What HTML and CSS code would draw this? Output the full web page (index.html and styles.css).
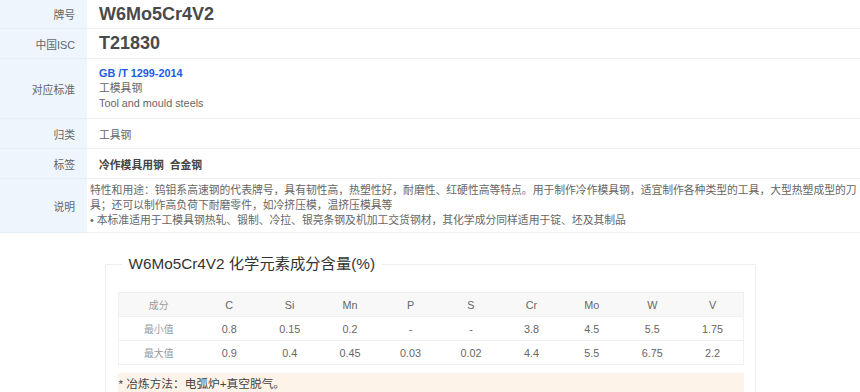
FILE: index.html
```html
<!DOCTYPE html>
<html lang="zh-CN">
<head>
<meta charset="utf-8">
<title>W6Mo5Cr4V2</title>
<link rel="stylesheet" href="styles.css">
</head>
<body>
<div class="info">
  <div class="row r1"><div class="lbl">牌号</div><div class="val big">W6Mo5Cr4V2</div></div>
  <div class="row r2"><div class="lbl">中国ISC</div><div class="val big">T21830</div></div>
  <div class="row r3"><div class="lbl">对应标准</div><div class="val lines"><a class="std">GB /T 1299-2014</a><span>工模具钢</span><span>Tool and mould steels</span></div></div>
  <div class="row r4"><div class="lbl">归类</div><div class="val">工具钢</div></div>
  <div class="row r5"><div class="lbl">标签</div><div class="val tags"><b>冷作模具用钢</b><b>合金钢</b></div></div>
  <div class="row r6"><div class="lbl">说明</div><div class="val desc"><p>特性和用途：钨钼系高速钢的代表牌号，具有韧性高，热塑性好，耐磨性、红硬性高等特点。用于制作冷作模具钢，适宜制作各种类型的工具，大型热塑成型的刀具；还可以制作高负荷下耐磨零件，如冷挤压模，温挤压模具等</p><p>• 本标准适用于工模具钢热轧、锻制、冷拉、银亮条钢及机加工交货钢材，其化学成分同样适用于锭、坯及其制品</p></div></div>
</div>
<fieldset class="chem">
  <legend>W6Mo5Cr4V2 化学元素成分含量(%)</legend>
  <table class="ctab">
    <colgroup><col class="c0"><col><col><col><col><col><col><col><col><col></colgroup>
    <tr class="head"><td class="k">成分</td><td>C</td><td>Si</td><td>Mn</td><td>P</td><td>S</td><td>Cr</td><td>Mo</td><td>W</td><td>V</td></tr>
    <tr><td class="k">最小值</td><td>0.8</td><td>0.15</td><td>0.2</td><td>-</td><td>-</td><td>3.8</td><td>4.5</td><td>5.5</td><td>1.75</td></tr>
    <tr><td class="k">最大值</td><td>0.9</td><td>0.4</td><td>0.45</td><td>0.03</td><td>0.02</td><td>4.4</td><td>5.5</td><td>6.75</td><td>2.2</td></tr>
  </table>
  <div class="note">* 冶炼方法：电弧炉+真空脱气。</div>
</fieldset>
</body>
</html>
```
FILE: styles.css
```css
html, body {
  margin: 0;
  padding: 0;
  background: #fff;
}
body {
  font-family: "Liberation Sans", "Noto Sans CJK SC", sans-serif;
  font-size: 10.8px;
  color: #666;
}
.info {
  display: flex;
  flex-direction: column;
}
.row {
  display: grid;
  grid-template-columns: 87px 1fr;
}
.lbl {
  background: #eef5fc;
  text-align: right;
  padding-right: 12px;
  display: flex;
  align-items: center;
  justify-content: flex-end;
  border-bottom: 1px solid #e6eef6;
  color: #666;
}
.val {
  padding-left: 12px;
  display: flex;
  align-items: center;
  border-bottom: 1px solid #f0f0f0;
  color: #666;
}
.r1 { height: 29px; }
.r2 { height: 30px; }
.r3 { height: 60px; }
.r4 { height: 30px; }
.r5 { height: 30px; }
.r6 { height: 54px; }
.big {
  font-size: 18px;
  font-weight: bold;
  color: #4a4a4a;
}
.lines {
  flex-direction: column;
  align-items: flex-start;
  justify-content: center;
  line-height: 15px;
}
.std {
  color: #1e5be6;
  font-weight: bold;
}
.tags b {
  color: #444;
  margin-right: 6px;
}
.desc {
  padding-left: 3px;
  flex-direction: column;
  align-items: flex-start;
  justify-content: center;
  line-height: 15px;
}
.desc p {
  margin: 0;
}
.chem {
  box-sizing: border-box;
  width: 651px;
  margin: 21px auto 0;
  padding: 18px 11px 0 12px;
  border: 1px solid #eeeeee;
}
.chem legend {
  margin-left: 4px;
  padding: 0 7px;
  font-size: 15.3px;
  line-height: 20px;
  color: #333;
}
.ctab {
  width: 100%;
  border-collapse: collapse;
  border: 1px solid #f0f0f0;
  table-layout: fixed;
}
.ctab .c0 { width: 81px; }
.ctab td {
  height: 23px;
  padding: 0;
  text-align: center;
  border-bottom: 1px solid #f0f0f0;
  color: #666;
}
.ctab .head td {
  background: #f8f8f8;
}
.ctab td.k {
  font-size: 9.9px;
  color: #999;
}
.note {
  margin-top: 8px;
  background: #fdf3e9;
  padding: 2px 1px;
  font-size: 11.7px;
  line-height: 18px;
  color: #444;
}
```
